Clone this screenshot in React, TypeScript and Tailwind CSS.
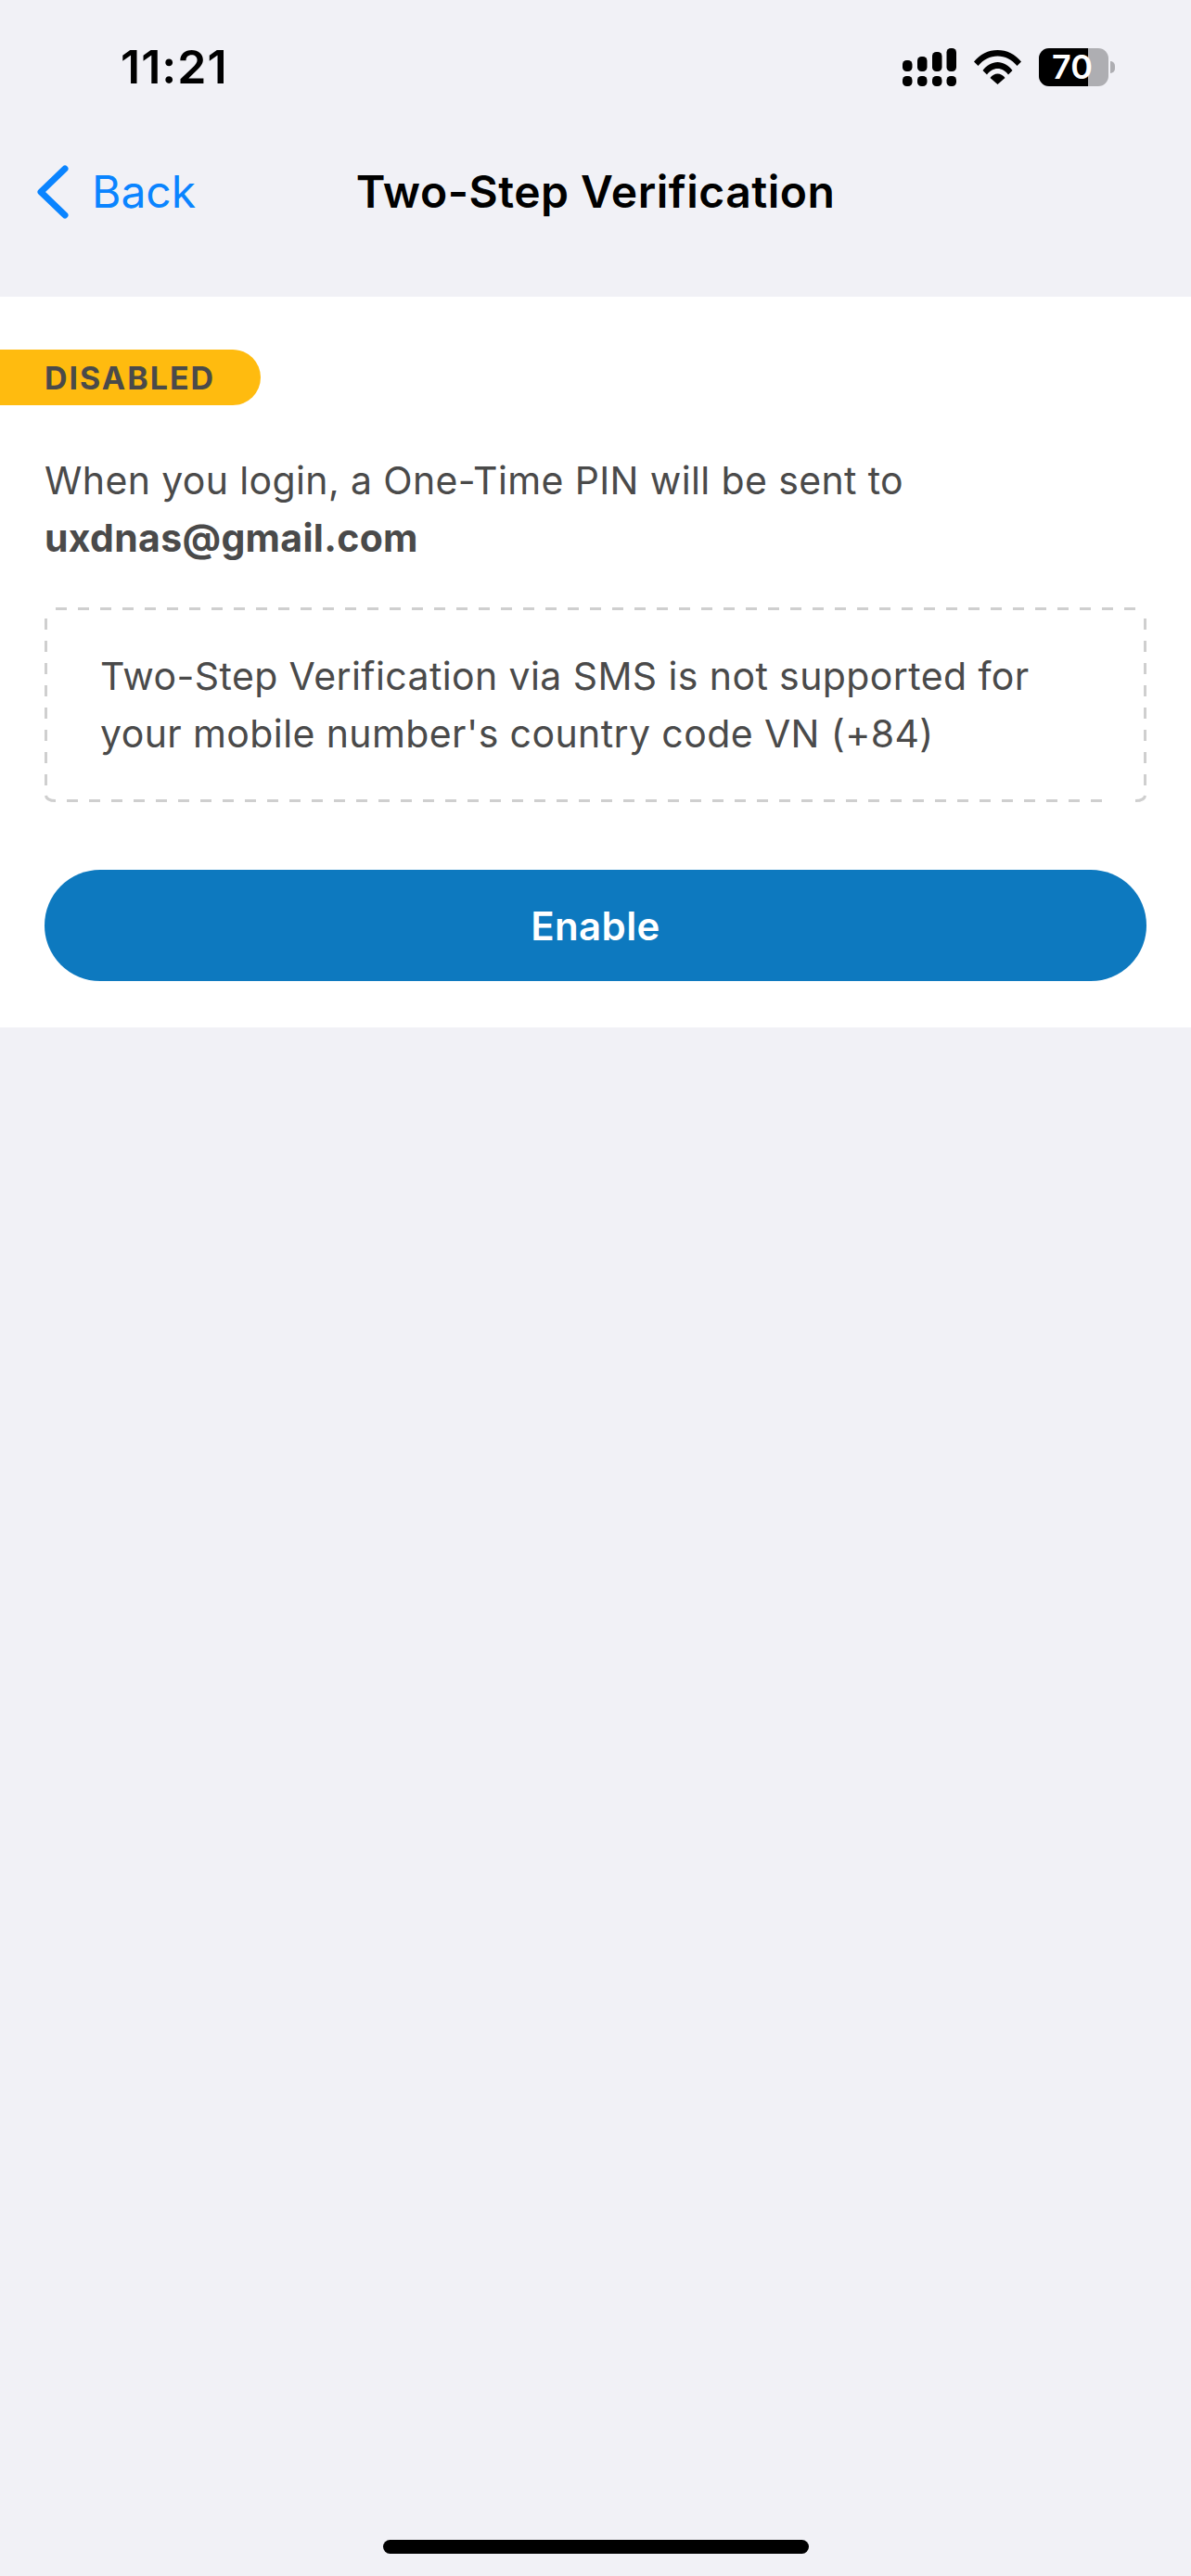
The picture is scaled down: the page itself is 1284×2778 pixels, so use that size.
import React from 'react';

const font = "font-['Inter','Liberation_Sans',sans-serif]";

const SignalIcon = () => (
  <svg width="58" height="41" viewBox="0 0 58 41" fill="#000">
    <rect x="0" y="13" width="10.500" height="12" rx="4.5" />
    <rect x="16" y="9" width="10.500" height="16" rx="4.5" />
    <rect x="32" y="4" width="10.500" height="21" rx="4.5" />
    <rect x="47.500" y="0" width="10.500" height="25" rx="4.5" />
    <rect x="0" y="30" width="10.500" height="11" rx="4.5" />
    <rect x="16" y="30" width="10.500" height="11" rx="4.5" />
    <rect x="32" y="30" width="10.500" height="11" rx="4.5" />
    <rect x="47.500" y="30" width="10.500" height="11" rx="4.5" />
  </svg>
);

const WifiIcon = () => (
  <svg width="51" height="37" viewBox="0 0 51 37" fill="#000">
    <path d="M0 12.500C6.500 4.500 15.500 0 25.500 0S44.500 4.500 51 12.500l-4.500 4.500C41 10.500 33.500 6.500 25.500 6.500S10 10.500 4.500 17z" />
    <path d="M9.500 22C13.500 16.500 19.500 13 25.500 13S37.500 16.500 41.500 22L37 26.500C34 22.500 30 20 25.500 20S17 22.500 14 26.500z" />
    <path d="M17.500 30C19.500 27 22.500 25.500 25.500 25.500S31.500 27 33.500 30L25.500 37z" />
  </svg>
);

const BatteryIcon = () => (
  <div className="flex items-center">
    <div className="relative h-[41px] w-[75px] rounded-[11px] bg-[#aeaeb2]">
      <div className="h-full w-[53px] rounded-l-[11px] bg-black" />
      <span className="absolute left-[14px] top-0 text-[36px] leading-[41px] font-semibold text-white">70</span>
    </div>
    <div className="ml-[2px] h-[13px] w-[5px] rounded-r-full bg-[#aeaeb2]" />
  </div>
);

const StatusBar = () => (
  <div className="flex h-[113px] items-start justify-between pl-[130px] pr-[82px] pt-[45px]">
    <span className="text-[50px] leading-[54px] font-semibold tracking-[1px] text-black">11:21</span>
    <div className="mt-[7px] flex items-center gap-[19px]">
      <SignalIcon />
      <WifiIcon />
      <BatteryIcon />
    </div>
  </div>
);

const NavBar = () => (
  <div className="grid h-[207px] grid-cols-[1fr_auto_1fr] items-center pb-[19px]">
    <div className="flex items-center gap-[25px] pl-[40px]">
      <svg width="34" height="58" viewBox="0 0 34 58" fill="none" stroke="#0a84ff" strokeWidth="7" strokeLinecap="round" strokeLinejoin="round">
        <path d="M30 4 4 29l26 25" />
      </svg>
      <span className="text-[48px] leading-[58px] text-[#0a84ff]">Back</span>
    </div>
    <h1 className="text-[48px] leading-[58px] font-semibold tracking-[0.5px] text-black">Two-Step Verification</h1>
    <div />
  </div>
);

// css dashes can't get 12/12 at this stroke width, so draw them
const DashedFrame = () => (
  <svg className="absolute inset-0" width="1188" height="210" viewBox="0 0 1188 210" fill="none" stroke="#cfcfcf" strokeWidth="3" strokeDasharray="12 12">
    <path d="M12 1.500H1176" />
    <path d="M1.500 12V199" />
    <path d="M1186.500 12V199" />
    <path d="M24 208.500H1152" />
    <path d="M1.500 203Q2 208.500 12 208.500" strokeDasharray="none" />
    <path d="M1176 208.500Q1186 208.500 1186.500 203" strokeDasharray="none" />
  </svg>
);

export default function App() {
  return (
    <div className={`${font} flex min-h-[2778px] flex-col bg-[#f1f1f6]`}>
      <StatusBar />
      <NavBar />
      <main className="h-[788px] bg-white pt-[57px]">
        <div className="flex h-[60px] w-[281px] items-center rounded-r-full bg-[#ffbb0f] pl-[48px]">
          <span className="text-[34px] font-bold tracking-[2px] text-[#4a4a4a]">DISABLED</span>
        </div>
        <div className="px-[48px] pt-[50px]">
          <p className="text-[41px] leading-[62px] tracking-[0.37px] text-[#4a4a4a]">
            When you login, a One-Time PIN will be sent to
            <br />
            <span className="font-bold tracking-[0.3px]">uxdnas@gmail.com</span>
          </p>
          <div className="relative mt-[44px] h-[210px] px-[60px] pt-[43px]">
            <DashedFrame />
            <p className="text-[41px] leading-[62px] tracking-[0.4px] text-[#4a4a4a]">
              Two-Step Verification via SMS is not supported for
              <br />
              your mobile number's country code VN (+84)
            </p>
          </div>
          <button className="mt-[73px] flex h-[120px] w-full items-center justify-center rounded-full bg-[#0d79bf] text-[42px] font-semibold tracking-[0.4px] text-white">
            Enable
          </button>
        </div>
      </main>
      <div className="mt-auto flex justify-center pb-[24px]">
        <div className="h-[15px] w-[459px] rounded-[8px] bg-black" />
      </div>
    </div>
  );
}
